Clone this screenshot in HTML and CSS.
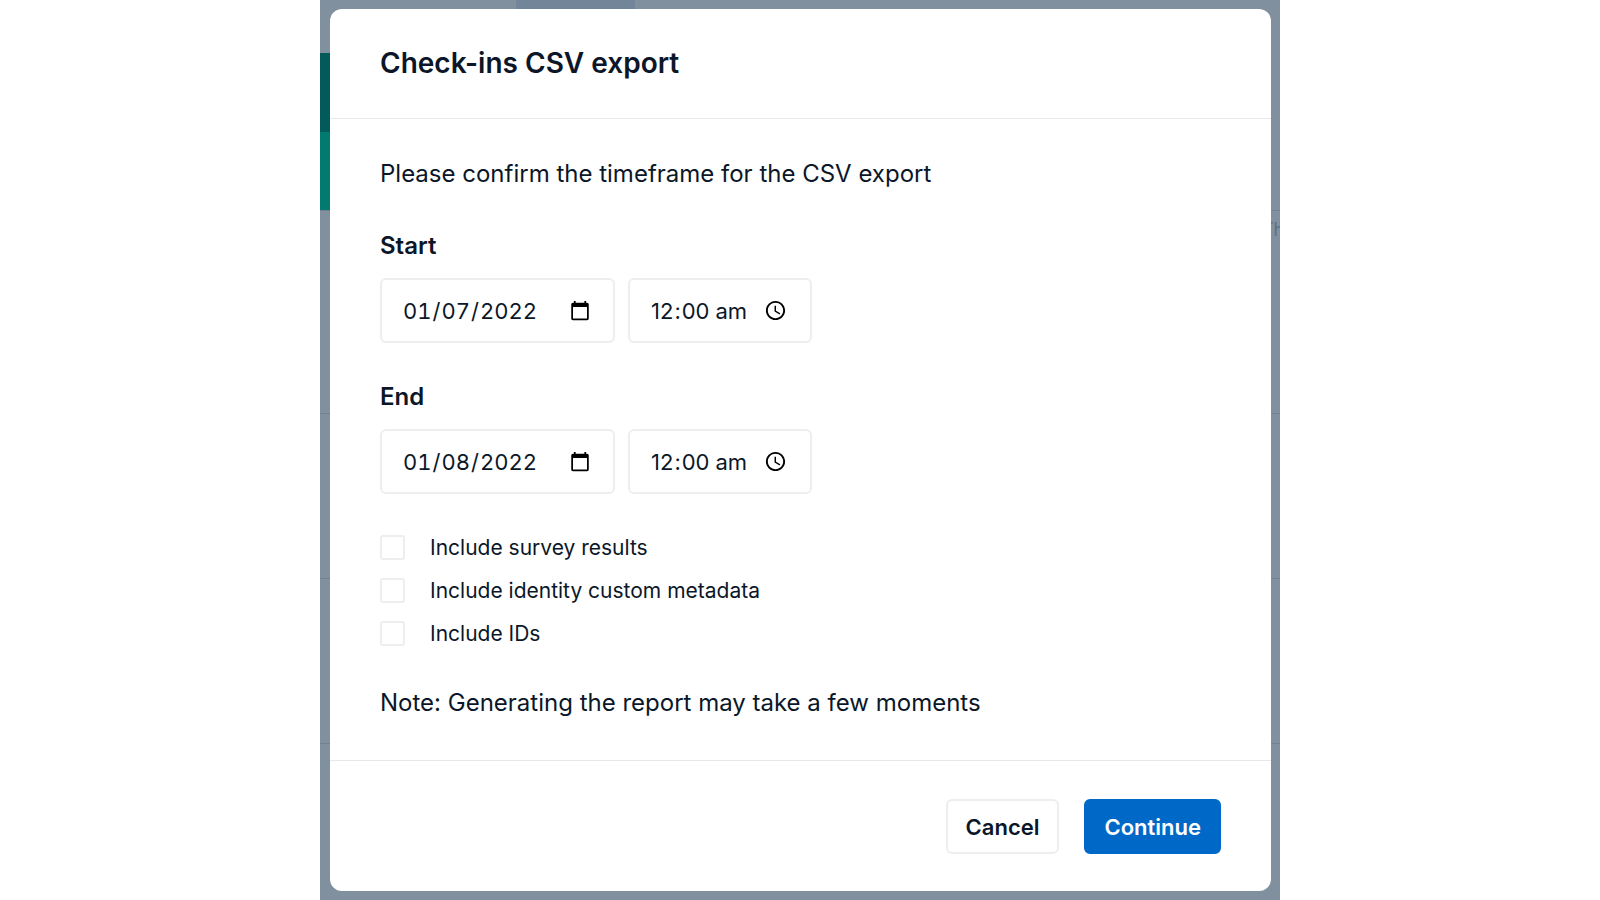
FILE: index.html
```html
<!DOCTYPE html>
<html lang="en">
<head>
  <meta charset="UTF-8">
  <meta name="viewport" content="width=device-width, initial-scale=1">
  <title>Check-ins CSV export</title>
  <link rel="stylesheet" href="styles.css">
</head>
<body>
  <div class="stage">
    <!-- Dimmed page behind the dialog -->
    <div class="backdrop" aria-hidden="true">
      <div class="topbar"><div class="tab"></div></div>
      <div class="banner dark"></div>
      <div class="banner light"></div>
      <div class="line tall"><span class="column-name">Th</span></div>
      <div class="line"></div>
      <div class="line"></div>
      <div class="line last"></div>
    </div>

    <form class="modal" role="dialog" aria-labelledby="modal-title">
      <header class="modal-header">
        <h1 id="modal-title">Check-ins CSV export</h1>
      </header>

      <div class="modal-body">
        <p>Please confirm the timeframe for the CSV export</p>

        <fieldset class="period">
          <legend>Start</legend>
          <div class="fields">
            <input class="date" type="date" aria-label="Start date" value="2022-01-07">
            <input class="time" type="time" aria-label="Start time" value="00:00">
          </div>
        </fieldset>

        <fieldset class="period">
          <legend>End</legend>
          <div class="fields">
            <input class="date" type="date" aria-label="End date" value="2022-01-08">
            <input class="time" type="time" aria-label="End time" value="00:00">
          </div>
        </fieldset>

        <div class="options">
          <label><input type="checkbox" name="survey">Include survey results</label>
          <label><input type="checkbox" name="metadata">Include identity custom metadata</label>
          <label><input type="checkbox" name="ids">Include IDs</label>
        </div>

        <p>Note: Generating the report may take a few moments</p>
      </div>

      <footer class="modal-footer">
        <button type="button" class="btn">Cancel</button>
        <button type="submit" class="btn primary">Continue</button>
      </footer>
    </form>
  </div>
</body>
</html>
```

FILE: styles.css
```css
* {
  box-sizing: border-box;
}
body {
  margin: 0;
  background-color: #fff;
  color: #0b1728;
  font-family: Inter, "Liberation Sans", sans-serif;
}
.stage {
  position: relative;
  display: flex;
  width: 60%;
  min-height: 100vh;
  margin: 0 auto;
  padding: 9px 9px 9px 10px;
  background-color: #81909f;
}

/* page behind */
.backdrop {
  position: absolute;
  inset: 0;
  display: flex;
  flex-direction: column;
  overflow: hidden;
}
.topbar {
  height: 53px;
}
.tab {
  width: 119px;
  height: 100%;
  margin-left: 196px;
  background-color: #728599;
}
.banner {
  width: 30%;
}
.banner.dark {
  height: 79px;
  background-color: #025a5a;
}
.banner.light {
  height: 78px;
  background-color: #037a70;
}
.line {
  height: 165px;
  border-top: 1px solid #738292;
}
.line.tall {
  display: flex;
  justify-content: flex-end;
  height: 203px;
  padding-top: 7px;
}
.line.last {
  flex: 1;
}
.column-name {
  width: 18px;
  color: #5f7084;
  font-size: 18px;
  line-height: 24px;
}

/* dialog */
.modal {
  position: relative;
  display: flex;
  flex-direction: column;
  flex: 1;
  background-color: #fff;
  border-radius: 12px;
}
.modal-header {
  padding: 36px 50px 37px;
  border-bottom: 1px solid #e6e9eb;
}
h1 {
  margin: 0;
  font-size: 28px;
  font-weight: 600;
  line-height: 36px;
}
.modal-body {
  display: flex;
  flex-direction: column;
  flex: 1;
  padding: 39px 50px 38px;
}
p {
  margin: 0;
  font-size: 24px;
  line-height: 32px;
}
.period {
  margin: 40px 0 0;
  padding: 0;
  border: 0;
}
.period + .period {
  margin-top: 38px;
}
legend {
  padding: 0;
  margin-bottom: 16px;
  font-size: 24px;
  font-weight: 600;
  line-height: 32px;
}
.fields {
  display: flex;
  gap: 13px;
}
.date,
.time {
  height: 65px;
  padding: 0 20px;
  border: 2px solid #eceeef;
  border-radius: 6px;
  background-color: #fff;
  color: inherit;
  font-family: inherit;
  font-size: 22px;
}
.date {
  width: 235px;
  font-variant-numeric: tabular-nums;
}
.time {
  width: 184px;
}
.time::-webkit-datetime-edit {
  text-transform: lowercase;
}
.options {
  display: flex;
  flex-direction: column;
  gap: 11px;
  margin: 37px 0 38px;
}
.options label {
  display: flex;
  align-items: center;
  gap: 25px;
  height: 32px;
  font-size: 21px;
}
.options input {
  appearance: none;
  width: 25px;
  height: 25px;
  margin: 0;
  border: 2px solid #eceeef;
  border-radius: 3px;
}
.options input:checked {
  background-color: #0069c8;
}
.modal-footer {
  display: flex;
  justify-content: flex-end;
  gap: 25px;
  padding: 38px 50px 37px;
  border-top: 1px solid #e6e9eb;
}
.btn {
  height: 55px;
  padding: 0 18px;
  border: 2px solid #eceeef;
  border-radius: 6px;
  background-color: #fff;
  color: inherit;
  font-family: inherit;
  font-size: 22px;
  font-weight: 600;
  cursor: pointer;
}
.btn.primary {
  border-color: #0069c8;
  background-color: #0069c8;
  color: #fff;
}
```
